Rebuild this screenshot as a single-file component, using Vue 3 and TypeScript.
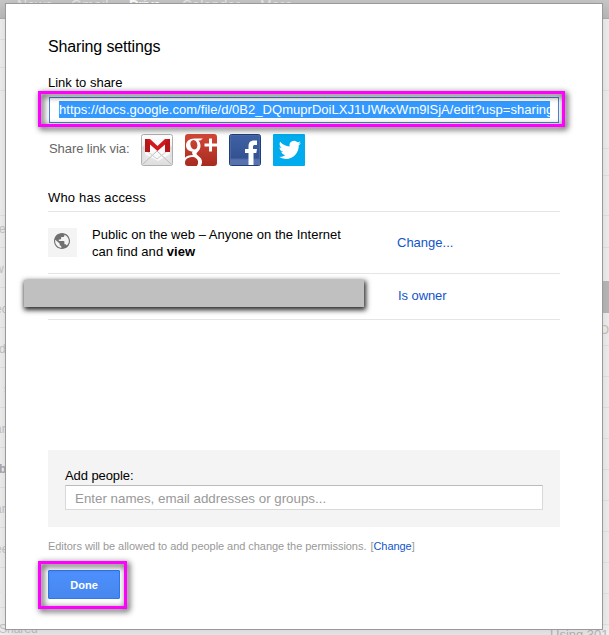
<script setup lang="ts">
const nav: string[] = ['News', 'Gmail', 'Drive', 'Calendar', 'More']
const leftRows: string[] = ['re', 'w', 'ec', 'd', 's', 'ar', 'b', 'ar', 'ee', 'l.', 'Shared']
const link = 'https://docs.google.com/file/d/0B2_DQmuprDoiLXJ1UWkxWm9lSjA/edit?usp=sharing'
</script>

<template>
  <div class="page">
    <div class="backdrop">
      <div class="nav"><span v-for="n in nav" :key="n" :class="{ current: n === 'Drive' }">{{ n }}</span></div>
      <div class="columns">
        <div class="left-list">
          <i class="h20"></i><i class="h28"></i><i class="h23"></i><i class="h125"></i>
          <div v-for="(r, i) in leftRows" :key="i" :class="{ strong: r === 'b', single: r === 'b' || r === 'd', indent: r === 's' }">{{ r }}</div>
        </div>
        <div class="right-list">
          <i class="tall"></i><i class="space"></i><i class="short"></i><i class="mid"></i><i class="row"></i><i class="gap"></i>
          <b></b><span>Or</span><i v-for="n in 9" :key="n" class="line"></i><span class="using">Using 301</span>
        </div>
      </div>
    </div>
    <main class="dialog">
      <h1>Sharing settings</h1>
      <label class="link-label">Link to share</label>
      <div class="link-frame frame"><div class="link-input"><span>{{ link }}</span></div></div>
      <div class="share">
        <span class="via">Share link via:</span>
        <svg viewBox="0 0 32 32">
          <defs><linearGradient id="mail" x2="0" y2="1"><stop stop-color="#fff" /><stop offset="1" stop-color="#ddd" /></linearGradient></defs>
          <rect x=".5" y=".5" width="31" height="31" rx="2" fill="url(#mail)" stroke="#b0b0b0" />
          <path d="M1 13L4 10v10L1 30zM31 13l-3-3v10l3 10z" fill="#e0e0e0" />
          <path d="M4 7h25v13l-12 7-13-7z" fill="#fafafa" />
          <path d="M2 30l14-13L30 30" fill="none" stroke="#bbb" />
          <path d="M2 14l14 11 14-11" fill="none" stroke="#ccc" />
          <path d="M4 18V5h5l7.500 7L24 5h5v13h-5v-7.500L16.500 17 9 10.500V18z" fill="#d0171c" />
          <path d="M4 18V5h2l3 5.500V18zM29 18V5h-2l-3 5.500V18z" fill="#b5161a" />
        </svg>
        <svg viewBox="0 0 32 32">
          <defs><linearGradient id="plus" x2="0" y2="1"><stop stop-color="#d34736" /><stop offset="1" stop-color="#a72b20" /></linearGradient></defs>
          <rect width="32" height="32" rx="3" fill="url(#plus)" />
          <path d="M18 4.500h-8.500C4 4.500 1 7.500 1 11.500c0 3.700 3 6 6.500 6-.8 1.500-.3 2.500.5 3.500-4 0-6.500 1-8 2.800v4.500c.5-3.800 3.500-5.300 8.500-5.300 4 1.500 5 3.500 4.500 6.500-.2 1-.6 1.700-1.300 2.500h4c1.500-2 2-5 .3-7.500-1.500-2.300-4.500-3.300-4.500-4.800 0-1.700 4-3 4-7.700 0-2.500-.8-4.200-2.200-5.500h2zM8.500 6c4.500 0 5.500 9.500 1 9.500S3.500 6 8.500 6z" fill="#fff" fill-rule="evenodd" />
          <path d="M25.500 4.500v13M19.500 11h12.500" stroke="#fff" stroke-width="3" />
        </svg>
        <svg viewBox="0 0 32 32">
          <defs><linearGradient id="face" x2="0" y2="1"><stop stop-color="#3f61a5" /><stop offset="1" stop-color="#304d8a" /></linearGradient></defs>
          <rect x=".5" y=".5" width="31" height="31" rx="2" fill="url(#face)" stroke="#1e3f7c" />
          <path d="M1 25h30v6H1z" fill="#5872ad" /><path d="M1.500 25V1.500h29V25z" fill="none" stroke="#4b69a5" />
          <path d="M19.500 31V19H16v-4h3.500v-2.500c0-4 2-6 5.500-6h3v4.500h-2c-1.500 0-2 .5-2 2V15h4l-.7 4H24.500v12z" fill="#fff" />
        </svg>
        <svg viewBox="0 0 32 32">
          <rect width="32" height="32" rx="1" fill="#00aced" />
          <path transform="translate(5.700 4.700) scale(.93)" d="M23.950 4.570a10 10 0 0 1-2.820.78 4.960 4.960 0 0 0 2.160-2.730c-.95.560-2 .96-3.130 1.180a4.920 4.920 0 0 0-8.380 4.490C7.690 8.100 4.070 6.130 1.640 3.160a4.820 4.820 0 0 0-.67 2.480c0 1.710.87 3.210 2.190 4.090a4.900 4.900 0 0 1-2.230-.61v.06a4.920 4.920 0 0 0 3.950 4.830 5 5 0 0 1-2.210.080 4.940 4.940 0 0 0 4.600 3.420A9.870 9.870 0 0 1 0 19.540a13.990 13.990 0 0 0 7.560 2.210c9.050 0 14-7.500 14-13.980l-.02-.63a9.940 9.940 0 0 0 2.410-2.570z" fill="#fff" />
        </svg>
      </div>
      <h2>Who has access</h2>
      <div class="access public">
        <div class="globe"><svg viewBox="2 2 20 20"><path fill="#707070" d="M12 2C6.480 2 2 6.480 2 12s4.480 10 10 10 10-4.480 10-10S17.520 2 12 2zM12 20.600C7.100 20.600 3.400 16.600 3.400 12c0-.6 0-1 .2-1.500L9 15v1c0 1.100.9 2 2 2v2.500h1zm5.900-2.900c-.3-.9-1-1.700-1.900-1.700h-1v-3c0-.55-.45-1-1-1H8v-2h2c.55 0 1-.45 1-1V7h2c1.100 0 2-.9 2-2v-.9c3.300 1.300 5.600 4.400 5.600 7.900 0 2.200-1 4.300-2.700 5.700z" /></svg></div>
        <p>Public on the web – Anyone on the Internet<br />can find and <strong>view</strong></p>
        <a>Change...</a>
      </div>
      <div class="access owner"><div class="redacted"></div><a>Is owner</a></div>
      <section class="people">
        <label>Add people:</label>
        <div class="names">Enter names, email addresses or groups...</div>
      </section>
      <p class="editors">Editors will be allowed to add people and change the permissions. <span>[<a>Change</a>]</span></p>
      <div class="done-frame frame"><button>Done</button></div>
    </main>
  </div>
</template>

<style>
body { margin: 0; overflow: hidden; }
</style>

<style scoped>
* { box-sizing: border-box; }
.page { position: relative; width: 609px; height: 635px; overflow: hidden; padding: 3px 6px 5px 5px; font: 13px/17px "Liberation Sans", Arial, sans-serif; color: #000; }
.backdrop { position: absolute; inset: 0; background: #f3f3f3; }
.nav { height: 19px; background: linear-gradient(#c8c8c8, #bdbdbd); border-bottom: 1px solid #b0b0b0; display: grid; grid-template-columns: 54px 58px 53px 78px 60px; padding-left: 17px; color: #e8e8e8; font-size: 14px; line-height: 11px; letter-spacing: .2px; }
.current { color: #fff; font-weight: bold; letter-spacing: -.8px; }
.columns { display: flex; justify-content: space-between; }
i { display: block; border-bottom: 1px solid #e6e6e6; flex-shrink: 0; }
.left-list { width: 60px; color: #c6c6c6; }
.h20 { height: 21px; } .h28 { height: 28px; } .h23 { height: 23px; } .h125 { height: 125px; }
.left-list div { height: 40px; border-bottom: 1px solid #e6e6e6; padding-top: 13px; line-height: 17px; font-size: 12px; margin-left: -5px; }
.left-list i + div { height: 32px; padding-top: 5px; }
.left-list div:last-child { padding: 13px 0 0 4px; }
.left-list .strong { font-weight: bold; color: #aaa; }
.left-list .single { padding-left: 4px; }
.left-list .indent { padding-left: 9px; }
.right-list { width: 60px; display: flex; flex-direction: column; color: #c9c6c0; }
.right-list .tall { height: 72px; } .right-list .space { height: 58px; } .right-list .short { height: 27px; }
.right-list .mid { height: 40px; } .right-list .row { height: 32px; } .right-list .gap { height: 33px; border: 0; }
.right-list b { height: 32px; background: #bbb; } .right-list span { height: 33px; padding: 8px 0 0 50px; border-bottom: 1px solid #e6e6e6; white-space: nowrap; }
.right-list .line { height: 31px; }
.right-list .using { height: 40px; padding: 1px 0 0 1px; border: 0; color: #bbb; }
.dialog { position: relative; width: 598px; height: 627px; background: #fff; border: 1px solid #9a9a9a; box-shadow: 0 4px 16px rgba(0,0,0,.14); padding: 33px 42px 0; display: flex; flex-direction: column; }
h1, h2, p { margin: 0; font-weight: normal; }
h1 { font-size: 16px; line-height: 20px; letter-spacing: -.15px; }
.link-label { margin-top: 17px; }
.frame { position: relative; flex-shrink: 0; }
.frame::after { content: ""; position: absolute; inset: 0; border: 3px solid #f0f; filter: drop-shadow(2px 2px 3px rgba(0,0,0,.95)); pointer-events: none; }
.link-frame { width: 527px; height: 36px; margin-left: -10px; padding: 6px 6px 4px 11px; }
.link-input { height: 26px; border: 1px solid #4d83d8; background: #fff; padding: 3px 8px 4px 9px; }
.link-input span { display: block; height: 17px; overflow: hidden; white-space: nowrap; background: #39f; color: #fff; letter-spacing: .035px; }
.share { height: 32px; margin-top: 7px; display: flex; align-items: center; gap: 12px; }
.share svg { width: 32px; height: 32px; flex-shrink: 0; }
.via { width: 81px; padding-left: 1px; color: #666; margin-top: -4px; white-space: nowrap; letter-spacing: -.08px; }
h2 { font-size: 13px; line-height: 17px; margin-top: 23px; padding-bottom: 5px; border-bottom: 1px solid #e5e5e5; letter-spacing: .18px; }
.access { display: flex; border-bottom: 1px solid #e5e5e5; flex-shrink: 0; }
.public { height: 62px; padding-top: 14px; }
.globe { width: 29px; height: 29px; margin-top: 2px; background: #f4f4f4; padding: 5px 0 0 6px; }
.globe svg { display: block; width: 16px; height: 16px; }
.public p { width: 320px; padding-left: 15px; letter-spacing: .025px; }
a { color: #15c; }
.public a { padding-top: 8px; }
.owner { height: 46px; }
.redacted { width: 340px; height: 27px; margin: 6px 34px 0 -24px; background: #c0c0c0; box-shadow: 1px 2px 5px 1px rgba(0,0,0,.85); }
.owner a { padding-top: 13px; letter-spacing: -.08px; }
.people { height: 77px; margin-top: 130px; background: #f4f4f4; padding: 17px; flex-shrink: 0; }
.people label { display: block; height: 18px; letter-spacing: -.08px; }
.names { height: 25px; background: #fff; border: 1px solid #d9d9d9; border-top-color: #bbb; padding: 4px 9px; color: #999; white-space: nowrap; font-size: 13.33px; line-height: 17px; }
.editors { font-size: 11px; line-height: 15px; color: #999; margin-top: 12px; letter-spacing: -.05px; }
.editors span { margin-left: 1px; }
.done-frame { width: 89px; height: 48px; margin: 7px 0 0 -10px; padding: 9px 7px 10px 10px; }
button { display: block; width: 72px; height: 29px; padding: 0; font: bold 11px "Liberation Sans", Arial, sans-serif; color: #fff; border: 1px solid #3079ed; border-radius: 1px; background: linear-gradient(#4d90fe, #4787ed); }
</style>
